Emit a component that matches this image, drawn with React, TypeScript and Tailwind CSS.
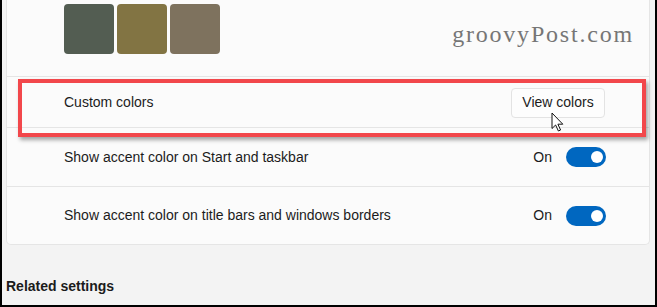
import React from 'react';

const swatches = ['#535d52', '#827443', '#7e725e'];

const toggleRows = [
  'Show accent color on Start and taskbar',
  'Show accent color on title bars and windows borders',
];

const Toggle: React.FC = () => (
  <div className="flex items-center gap-[14px]">
    <span>On</span>
    <div className="w-[40px] h-[20px] rounded-full bg-[#0067c0] flex items-center justify-end pr-[3px]">
      <div className="w-[12px] h-[12px] rounded-full bg-white" />
    </div>
  </div>
);

const Cursor: React.FC = () => (
  <svg width="13" height="20" viewBox="0 0 13 20" className="absolute left-[549px] top-[112px]">
    <path
      d="M1 1 L1 16.5 L4.6 13 L7.4 19 L9.6 18 L6.9 12.2 L11.8 12.2 Z"
      fill="#fff"
      stroke="#111"
      strokeWidth="1"
      strokeLinejoin="round"
    />
  </svg>
);

export default function App() {
  return (
    <div
      className="relative w-[657px] h-[307px] overflow-hidden bg-[#f3f3f3] border-l-2 border-r-2 border-b-2 border-black pl-[4px] pr-[5px] text-[14px] text-[#1b1b1b]"
      style={{ fontFamily: '"Liberation Sans", Arial, sans-serif' }}
    >
      <div className="bg-[#fbfbfb] border-x border-b border-[#e5e5e5] rounded-b-[5px]">
        <div className="h-[77px] border-b border-[#e5e5e5] pl-[57px] pt-[4px] flex gap-[3px]">
          {swatches.map((c) => (
            <div key={c} className="w-[50px] h-[50px] rounded-[4px]" style={{ backgroundColor: c }} />
          ))}
        </div>
        <div className="h-[51px] border-b border-[#e5e5e5] pl-[57px] pr-[44px] flex items-center justify-between">
          <span>Custom colors</span>
          <button className="w-[94px] h-[30px] mt-[1px] rounded-[4px] bg-[#fdfdfd] border border-[#e3e3e3] text-[14px] text-[#1b1b1b]">
            View colors
          </button>
        </div>
        {toggleRows.map((label, i) => (
          <div
            key={label}
            className={`pl-[57px] pr-[43px] flex items-center justify-between ${
              i === 0 ? 'h-[59px] border-b border-[#e5e5e5]' : 'h-[57px]'
            }`}
          >
            <span>{label}</span>
            <Toggle />
          </div>
        ))}
      </div>

      <div className="mt-[31px] font-semibold leading-[20px]">Related settings</div>

      <div
        className="absolute right-[21px] top-[19px] leading-[30px] text-[24px] tracking-[1.8px] text-[#767676]"
        style={{ fontFamily: '"Liberation Serif", Georgia, serif' }}
      >
        groovyPost.com
      </div>

      <div className="absolute left-[16px] top-[79px] w-[628px] h-[58px] border-4 border-[#f2474b] shadow-[2px_3px_4px_rgba(0,0,0,0.35)]" />

      <Cursor />
    </div>
  );
}
